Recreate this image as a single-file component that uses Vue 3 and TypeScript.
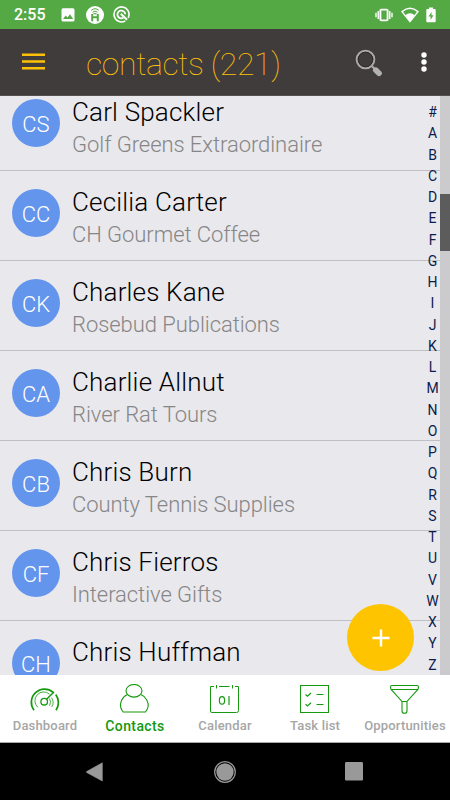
<script setup lang="ts">
interface Contact {
  initials: string
  name: string
  company: string
}

const contacts: Contact[] = [
  { initials: 'CS', name: 'Carl Spackler', company: 'Golf Greens Extraordinaire' },
  { initials: 'CC', name: 'Cecilia Carter', company: 'CH Gourmet Coffee' },
  { initials: 'CK', name: 'Charles Kane', company: 'Rosebud Publications' },
  { initials: 'CA', name: 'Charlie Allnut', company: 'River Rat Tours' },
  { initials: 'CB', name: 'Chris Burn', company: 'County Tennis Supplies' },
  { initials: 'CF', name: 'Chris Fierros', company: 'Interactive Gifts' },
  { initials: 'CH', name: 'Chris Huffman', company: '' },
]
const letters: string[] = '#ABCDEFGHIJKLMNOPQRSTUVWXYZ'.split('')
</script>

<template>
  <div class="screen">
    <div class="status">
      <span class="clock">2:55</span>
      <svg class="s-image" width="14" height="14" viewBox="0 0 14 14">
        <rect x="0.5" y="0.3" width="13" height="13.2" rx="1.6" fill="#fff" />
        <path d="M2 11 4.7 7.4 6.5 9.5 9 6.2 12.2 11Z" fill="#54a944" />
      </svg>
      <svg class="s-app" width="18" height="18" viewBox="0 0 18 18">
        <circle cx="9" cy="9" r="9" fill="#fff" />
        <g fill="none" stroke="#54a944">
          <path d="M6.2 15.2V8M11.8 15.2V8M6 11.3H12" stroke-width="2" />
          <path d="M5.2 4.4Q9 1 12.8 4.4M6.5 6.2Q9 4 11.5 6.2" stroke-width="1" />
          <path d="M7.5 7.7H10.5" stroke-width="1.2" />
        </g>
      </svg>
      <svg class="s-search" width="17" height="17" viewBox="0 0 17 17" fill="none" stroke="#fff">
        <path d="M12.3 14.9A7.5 7.5 0 1 1 15.2 11.8" stroke-width="1.6" />
        <path d="M10.3 11.8A3.9 3.9 0 1 1 12.2 8.3" stroke-width="1.8" />
        <path d="M7.8 7.8 14 13.8" stroke-width="1.9" />
      </svg>
      <span class="spacer"></span>
      <svg class="s-vibrate" width="18" height="14" viewBox="0 0 18 14" fill="none" stroke="#fff">
        <rect x="5.4" y="1.6" width="7.2" height="10.8" rx="0.8" stroke-width="1.9" />
        <path d="M1 4.8V9.2M3.2 3V11M14.8 3V11M17 4.8V9.2" stroke-width="1.4" />
      </svg>
      <svg class="s-wifi" width="18" height="16" viewBox="0 0 18 16">
        <path d="M1 4.6Q9-2.2 17 4.6L9 14.6Z" fill="none" stroke="#fff" stroke-width="1.5" stroke-linejoin="round" />
        <path d="M4.3 8.2Q9 4.5 13.7 8.2L9 14.5Z" fill="#fff" />
      </svg>
      <svg class="s-battery" width="10" height="16" viewBox="0 0 10 16">
        <path d="M3 0.4H7V2H8.8Q9.7 2 9.7 3V14.3Q9.7 15.3 8.8 15.3H1.2Q0.3 15.3 0.3 14.3V3Q0.3 2 1.2 2H3Z" fill="#fff" />
        <path d="M5.5 4.8 2.6 9.5H4.6V13L7.5 8.2H5.5Z" fill="#54a944" />
      </svg>
    </div>

    <header class="bar">
      <svg class="menu" width="24" height="20" viewBox="0 0 24 20" stroke="#ffc107" stroke-width="2.4">
        <path d="M1 2.8H24M1 9.5H24M1 16.2H24" />
      </svg>
      <h1>contacts (221)</h1>
      <svg class="find" width="28" height="28" viewBox="0 0 28 28" fill="none">
        <path d="M17.2 17.5 20.5 20.8" stroke="#aaa" stroke-width="2.2" />
        <path d="M20.9 21.3 24 24.3" stroke="#b2b2b2" stroke-width="5.6" stroke-linecap="round" />
        <circle cx="10.5" cy="10.5" r="8.8" stroke="#aaa" stroke-width="2" />
        <circle cx="10.5" cy="10.5" r="7.3" stroke="#2d2927" stroke-width="1" />
      </svg>
      <svg class="more" width="6" height="22" viewBox="0 0 6 22" fill="#fff">
        <circle cx="3" cy="4" r="2.7" /><circle cx="3" cy="11" r="2.7" /><circle cx="3" cy="18" r="2.7" />
      </svg>
    </header>

    <main class="content">
      <div class="list">
        <div v-for="c in contacts" :key="c.name" class="row">
          <div class="avatar">{{ c.initials }}</div>
          <div class="info">
            <div class="name">{{ c.name }}</div>
            <div class="company">{{ c.company }}</div>
          </div>
        </div>
      </div>
      <div class="track"><div class="thumb"></div></div>
      <nav class="index"><span v-for="l in letters" :key="l">{{ l }}</span></nav>
      <button class="fab" aria-label="Add">
        <svg width="18" height="18" viewBox="0 0 18 18" stroke="#fff" stroke-width="2.4"><path d="M0.5 9H17.5M9 0.5V17.5" /></svg>
      </button>
    </main>

    <nav class="tabs">
      <div class="tab">
        <svg width="32" height="32" viewBox="0 0 32 32" fill="none" stroke="#16990f">
          <path d="M5 26.2A13.2 13.2 0 0 1 24.2 8.3M26.7 10.6A13.2 13.2 0 0 1 27 26.2" stroke-width="1.7" />
          <path d="M8.8 23.3A8.8 8.8 0 0 1 20.6 10.2" stroke-width="0.8" />
          <path d="M22.4 13.6Q25.7 18 22.8 22.8M20.5 14.6Q22.6 18 20.5 21.7" stroke-width="0.8" />
          <circle cx="15.2" cy="17.7" r="3.3" stroke-width="1.3" />
          <path d="M17.5 15.3 25 8" stroke-width="1.5" />
        </svg>
        <span>Dashboard</span>
      </div>
      <div class="tab active">
        <svg width="32" height="32" viewBox="0 0 32 32" fill="none" stroke="#16990f" stroke-width="1.1">
          <ellipse cx="15" cy="6.8" rx="8" ry="6.3" />
          <path d="M8.5 10.5C3 12.5 0.5 19.5 1.7 23.5Q2.5 26 4.2 28H26.4Q28.5 25.5 29 23C30 19 27.2 12.5 21.8 10.5" />
        </svg>
        <span>Contacts</span>
      </div>
      <div class="tab">
        <svg width="32" height="32" viewBox="0 0 32 32" fill="none" stroke="#16990f" stroke-width="1">
          <path d="M5 2.5H1.5V27Q1.5 28.5 3 28.5H27.5Q29.5 28.5 29.5 26.5V2.5H26M10 2.5H20.5M7.5 1V4.5M23.5 1V4.5" />
          <ellipse cx="13" cy="16.4" rx="2.6" ry="3.8" stroke-width="1.2" /><path d="M20 12V21" stroke-width="1.2" />
        </svg>
        <span>Calendar</span>
      </div>
      <div class="tab">
        <svg width="32" height="32" viewBox="0 0 32 32" fill="none" stroke="#16990f" stroke-width="1">
          <rect x="1.5" y="1.5" width="28" height="27" />
          <path d="M6.5 10.5 8.5 12.3 12 9M17.5 10.5H24.5M6.5 20.3 8.5 22 12 18.8M17.5 20.5H24.5" stroke-width="1.2" />
        </svg>
        <span>Task list</span>
      </div>
      <div class="tab">
        <svg width="32" height="32" viewBox="0 0 32 32" fill="none" stroke="#16990f" stroke-width="1.1">
          <path d="M3 1.5H28Q29.5 1.5 29.5 3Q29.5 5 28.5 6L18 17.5V27Q18 29.3 15.5 29.3Q13 29.3 13 27V17.5L2.5 6Q1.5 5 1.5 3Q1.5 1.5 3 1.5ZM2.5 5.5H28.5M13 17.5H18" />
        </svg>
        <span>Opportunities</span>
      </div>
    </nav>

    <div class="system">
      <svg width="18" height="20" viewBox="0 0 18 20"><path d="M16.3 0.8V19L0.6 10.4Q0 10 0.6 9.6Z" fill="#999" stroke="#999" stroke-linejoin="round" stroke-width="0.6" /></svg>
      <svg width="22" height="22" viewBox="0 0 22 22"><circle cx="11" cy="11" r="10.3" fill="none" stroke="#999" stroke-width="1.2" /><circle cx="11" cy="11" r="8.7" fill="#999" /></svg>
      <svg width="18" height="19" viewBox="0 0 18 19"><rect width="18" height="18.5" rx="1.2" fill="#999" /></svg>
    </div>
  </div>
</template>

<style>
body { margin: 0; overflow: hidden; }
</style>

<style scoped>
.screen {
  width: 450px;
  height: 800px;
  display: flex;
  flex-direction: column;
  font-family: Roboto, "Liberation Sans", sans-serif;
  overflow: hidden;
}
.status {
  height: 29px;
  flex: none;
  box-sizing: border-box;
  padding: 0 14px 0 14px;
  background: #54a944;
  display: flex;
  align-items: center;
  color: #fff;
}
.clock { width: 47px; font-size: 16px; font-weight: 500; line-height: 29px; }
.s-app { margin-left: 11px; }
.s-search { margin-left: 9px; }
.spacer { flex: 1; }
.s-wifi { margin-left: 8px; }
.s-battery { margin-left: 7px; }
.bar {
  height: 67px;
  flex: none;
  background: #403c3b;
  display: flex;
  align-items: center;
  box-sizing: border-box;
  padding: 0 23px 0 21px;
  border-bottom: 1px solid #57504e;
}
.menu { margin-top: -1px; }
h1 {
  flex: 1;
  margin: 4px 0 0 41px;
  color: #ffc107;
  font-size: 32px;
  font-weight: 100;
  letter-spacing: -0.4px;
  line-height: 40px;
  white-space: nowrap;
}
.find { margin-right: 38px; margin-top: 1px; }
.content { height: 579px; flex: none; position: relative; overflow: hidden; background: #e9e8ed; }
.list { margin-top: -15px; }
.row {
  height: 90px;
  box-sizing: border-box;
  border-bottom: 1px solid #c0bfc4;
  display: flex;
  padding: 18px 0 0 12px;
}
.avatar {
  width: 48px;
  height: 48px;
  flex: none;
  border-radius: 50%;
  background: #6495ed;
  color: #fff;
  font-size: 22px;
  font-weight: 300;
  line-height: 51px;
  text-align: center;
}
.info { margin: -4px 0 0 12px; white-space: nowrap; }
.name { font-size: 26px; font-weight: 300; letter-spacing: 0.18px; line-height: 34px; color: #000; }
.company { margin-top: 1px; font-size: 22px; font-weight: 300; letter-spacing: -0.06px; line-height: 30px; color: #868686; }
.track { position: absolute; top: 0; right: 0; width: 10px; height: 579px; background: #cbcbcd; }
.thumb { margin-top: 98px; height: 57px; background: #5c5c5c; }
.index {
  position: absolute;
  top: 6px;
  right: 7.5px;
  width: 20px;
  display: flex;
  flex-direction: column;
  text-align: center;
  color: #0c1c4c;
  font-size: 14px;
  line-height: 21.25px;
}
.index span { height: 21.25px; }
.fab {
  position: absolute;
  left: 347px;
  top: 508px;
  width: 67px;
  height: 67px;
  border: 0;
  padding: 0;
  border-radius: 50%;
  background: #ffc400;
  display: flex;
  align-items: center;
  justify-content: center;
}
.tabs {
  height: 68px;
  flex: none;
  box-sizing: border-box;
  border-bottom: 1px solid #aaa;
  background: #fff;
  display: grid;
  grid-template-columns: repeat(5, 90px);
}
.tab {
  display: flex;
  flex-direction: column;
  align-items: center;
  padding-top: 9px;
  color: #a6a6a6;
  font-size: 13px;
  font-weight: 500;
  letter-spacing: 0.18px;
  line-height: 18px;
}
.tab svg { display: block; }
.tab span { margin-top: 1px; white-space: nowrap; }
.active { color: #16990f; }
.active span { font-size: 14px; letter-spacing: 0.4px; }
.system {
  flex: 1;
  background: #000;
  display: flex;
  justify-content: space-between;
  align-items: center;
  padding: 0 87px 0 86px;
}
</style>
